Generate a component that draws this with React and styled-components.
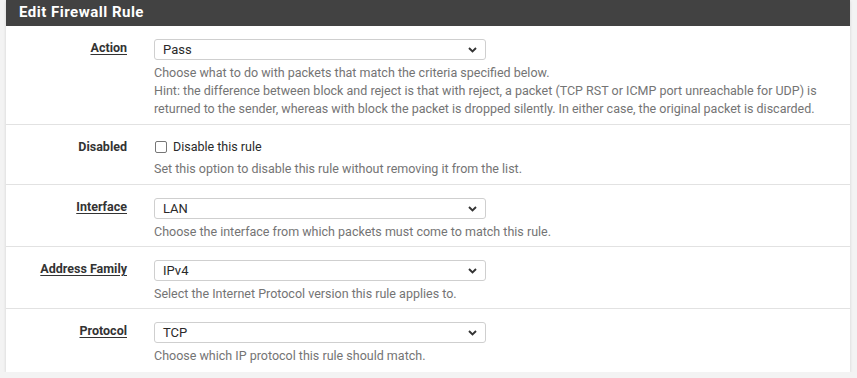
import React from "react";
import styled, { createGlobalStyle } from "styled-components";

const GlobalStyle = createGlobalStyle`
  html, body {
    margin: 0;
    padding: 0;
    background: #f3f3f3;
    font-family: Roboto, "Liberation Sans", Arial, sans-serif;
  }
`;

const Page = styled.div`
  padding: 0 7px 0 6px;
`;

const Panel = styled.div`
  background: #fff;
  box-shadow: 0 1px 3px rgba(0, 0, 0, 0.14);
`;

const Heading = styled.div`
  background: #424242;
  color: #fff;
  font-size: 15px;
  font-weight: 700;
  height: 26px;
  line-height: 25px;
  padding-left: 13px;
  letter-spacing: 0.5px;
`;

const Row = styled.div`
  display: grid;
  grid-template-columns: 121px 1fr;
  column-gap: 27px;
  padding: 13px 26px ${props => props.pb}px 0;
  border-top: ${props => (props.first ? "none" : "1px solid #e2e2e2")};
`;

const Label = styled.div`
  text-align: right;
  font-size: 12.5px;
  font-weight: 700;
  color: #333;
  line-height: 17.5px;
  span {
    text-decoration: ${props => (props.plain ? "none" : "underline")};
    text-underline-offset: 2px;
  }
`;

const Field = styled.div`
  display: flex;
  flex-direction: column;
  align-items: flex-start;
`;

const SelectBox = styled.div`
  box-sizing: border-box;
  width: 332px;
  height: 21px;
  border: 1px solid #cfcfcf;
  border-radius: 3px;
  display: flex;
  align-items: center;
  justify-content: space-between;
  padding: 0 8px 0 8px;
  font-size: 13px;
  color: #2a2a2a;
  background: #fff;
`;

const CheckLine = styled.label`
  display: flex;
  align-items: center;
  gap: 6px;
  height: 17px;
  font-size: 12.5px;
  color: #2a2a2a;
`;

const CheckBox = styled.span`
  box-sizing: border-box;
  width: 12px;
  height: 12px;
  margin-left: 1px;
  border: 1px solid #767676;
  border-radius: 2px;
`;

const Help = styled.div`
  margin-top: ${props => (props.tight ? 5 : 4)}px;
  font-size: 12.5px;
  line-height: 18px;
  color: #747474;
`;

const Chevron = () => (
  <svg width="9" height="6" viewBox="0 0 9 6">
    <path d="M1 1l3.5 3.5L8 1" fill="none" stroke="#333" strokeWidth="1.9" />
  </svg>
);

const Select = ({ value }) => (
  <SelectBox>
    <span>{value}</span>
    <Chevron />
  </SelectBox>
);

const rules = [
  {
    label: "Action",
    value: "Pass",
    pb: 6,
    help: [
      "Choose what to do with packets that match the criteria specified below.",
      <br key="b" />,
      "Hint: the difference between block and reject is that with reject, a packet (TCP RST or ICMP port unreachable for UDP) is returned to the sender, whereas with block the packet is dropped silently. In either case, the original packet is discarded.",
    ],
  },
  { label: "Disabled", check: "Disable this rule", pb: 6, help: "Set this option to disable this rule without removing it from the list." },
  { label: "Interface", value: "LAN", pb: 5, help: "Choose the interface from which packets must come to match this rule." },
  { label: "Address Family", value: "IPv4", pb: 5, help: "Select the Internet Protocol version this rule applies to." },
  { label: "Protocol", value: "TCP", pb: 7, help: "Choose which IP protocol this rule should match." },
];

const App = () => (
  <Page>
    <GlobalStyle />
    <Panel>
      <Heading>Edit Firewall Rule</Heading>
      {rules.map((r, i) => (
        <Row key={r.label} first={i === 0} pb={r.pb}>
          <Label plain={!!r.check}>
            <span>{r.label}</span>
          </Label>
          <Field>
            {r.check ? (
              <CheckLine>
                <CheckBox />
                {r.check}
              </CheckLine>
            ) : (
              <Select value={r.value} />
            )}
            <Help tight={!!r.check}>{r.help}</Help>
          </Field>
        </Row>
      ))}
    </Panel>
  </Page>
);

export default App;
